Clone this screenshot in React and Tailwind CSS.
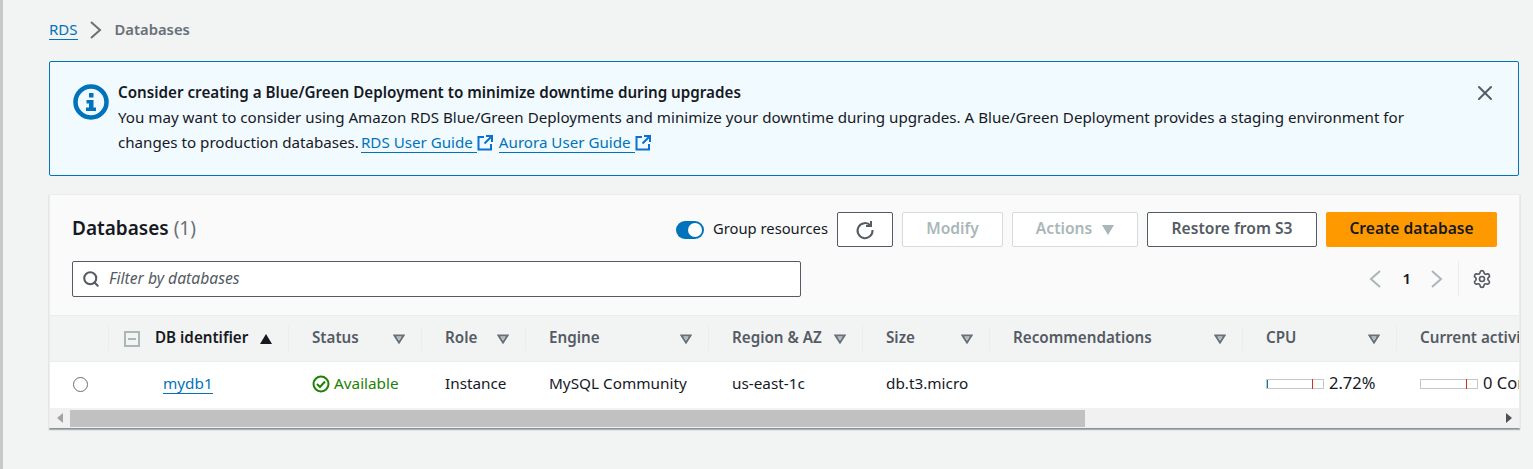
import { Search, Settings, X } from "lucide-react";

const FONT = "font-['Noto_Sans','Liberation_Sans',sans-serif]";

function ExternalIcon() {
  return (
    <svg width="16" height="16" viewBox="0 0 16 16" fill="none" stroke="#0972d3" strokeWidth="2" className="shrink-0">
      <path d="M7 2H1.500v12.500H14V9" />
      <path d="M9 1h6v6M15 1L7.500 8.500" />
    </svg>
  );
}

function InfoIcon() {
  return (
    <svg width="38" height="38" viewBox="0 0 38 38" className="shrink-0">
      <circle cx="19" cy="19" r="15.500" fill="none" stroke="#0073bb" strokeWidth="4.500" />
      <rect x="17" y="10" width="4.500" height="4.500" fill="#0073bb" />
      <path d="M14.500 17h7v7.500h2.500v3.500H14v-3.500h3v-4h-2.500z" fill="#0073bb" />
    </svg>
  );
}

function Caret({ color = "#687078" }) {
  return (
    <svg width="12" height="10" viewBox="0 0 12 10" className="shrink-0">
      <path d="M1.500 1.500h9L6 8.500z" fill="none" stroke={color} strokeWidth="2" strokeLinejoin="miter" />
      <path d="M4 3h4L6 6z" fill="#aab7b8" />
    </svg>
  );
}

function Chevron({ left, color, className }) {
  return (
    <svg width="12" height="18" viewBox="0 0 12 18" fill="none" stroke={color} strokeWidth="2" className={`shrink-0 ${className}`}>
      <path d={left ? "M11 1L2 9l9 8" : "M1 1l9 8-9 8"} />
    </svg>
  );
}

function Alert() {
  return (
    <div className="mt-[13px] ml-[46px] mr-[14px] h-[115px] border border-[#0073bb] rounded-[2px] bg-[#f1faff] flex pl-[22px] pr-[21px] pt-[18px]">
      <div className="mt-[3px] w-[46px]">
        <InfoIcon />
      </div>
      <div className="flex-1 text-[15.15px] leading-[25px] text-[#16191f] whitespace-nowrap">
        <div className="font-semibold text-[15.2px]">Consider creating a Blue/Green Deployment to minimize downtime during upgrades</div>
        <div>You may want to consider using Amazon RDS Blue/Green Deployments and minimize your downtime during upgrades. A Blue/Green Deployment provides a staging environment for</div>
        <div className="flex items-center">
          changes to production databases.
          <a className="ml-[2px] pr-[4px] text-[#0073bb] border-b border-[#0073bb] leading-[20px]">RDS User Guide</a>
          <ExternalIcon />
          <a className="ml-[6px] pr-[4px] text-[#0073bb] border-b border-[#0073bb] leading-[20px]">Aurora User Guide</a>
          <ExternalIcon />
        </div>
      </div>
      <X size={24} strokeWidth={2} className="text-[#545b64] mt-[1px]" />
    </div>
  );
}

function Toolbar() {
  const label = "pb-[2px] text-[15.6px] font-semibold";
  return (
    <div className="h-[121px] bg-[#fafafa] border-b border-[#eaeded] pl-[22px] pr-[22px] pt-[17px]">
      <div className="flex items-center h-[35px]">
        <div className="text-[19px] font-semibold text-[#16191f] leading-[32px] pb-[3px]">
          Databases <span className="font-normal text-[#687078]">(1)</span>
        </div>
        <div className="ml-auto w-[28px] h-[18px] rounded-full bg-[#0073bb] relative">
          <span className="absolute right-[2px] top-[2px] w-[14px] h-[14px] rounded-full bg-white" />
        </div>
        <span className="ml-[9px] pb-[2px] text-[14.75px] text-[#16191f]">Group resources</span>
        <button className="ml-[9px] w-[56px] h-[35px] border border-[#545b64] rounded-[2px] bg-white flex items-center justify-center">
          <svg width="20" height="20" viewBox="0 0 20 20" fill="none" stroke="#545b64" strokeWidth="2">
            <path d="M15.500 5.500A7.500 7.500 0 1 0 17.500 10" />
            <path d="M16 1v5h-5" />
          </svg>
        </button>
        <button className={`ml-[9px] w-[101px] h-[35px] border border-[#d5dbdb] rounded-[2px] bg-white text-[#aab7b8] ${label}`}>Modify</button>
        <button className={`ml-[9px] w-[126px] h-[35px] border border-[#d5dbdb] rounded-[2px] bg-white text-[#aab7b8] flex items-center justify-center gap-[10px] ${label}`}>
          Actions
          <svg width="12" height="10" viewBox="0 0 12 10" className="mt-[2px]"><path d="M0 0h12L6 10z" fill="#aab7b8" /></svg>
        </button>
        <button className={`ml-[9px] w-[170px] h-[35px] border border-[#545b64] rounded-[2px] bg-white text-[#545b64] ${label}`}>Restore from S3</button>
        <button className={`ml-[9px] w-[171px] h-[35px] rounded-[2px] bg-[#ff9900] text-[#16191f] ${label}`}>Create database</button>
      </div>
      <div className="flex items-center mt-[14px] h-[36px]">
        <div className="w-[729px] h-[36px] border border-[#545b64] rounded-[2px] bg-white flex items-center pl-[9px]">
          <Search size={18} strokeWidth={2.750} className="text-[#545b64]" />
          <span className="ml-[9px] pb-[1px] text-[15.7px] italic text-[#545b64]">Filter by databases</span>
        </div>
        <Chevron left color="#aab7b8" className="ml-auto" />
        <span className="ml-[21px] mr-[20px] pb-[2px] text-[15px] font-semibold text-[#16191f]">1</span>
        <Chevron color="#aab7b8" />
        <div className="ml-[15px] mr-[5px] h-[36px] border-l border-[#eaeded] pl-[13px] flex items-center">
          <Settings size={20} strokeWidth={2} className="text-[#545b64]" />
        </div>
      </div>
    </div>
  );
}

const columns = [
  { label: "Status" },
  { label: "Role" },
  { label: "Engine" },
  { label: "Region & AZ" },
  { label: "Size" },
  { label: "Recommendations" },
  { label: "CPU" },
];

function Meter({ load }) {
  return (
    <div className="w-[58px] h-[10px] border border-[#c4c8cc] relative shrink-0">
      {load && <span className="absolute left-0 top-0 w-[1px] h-full bg-[#0073bb]" />}
      <span className="absolute left-[45px] -top-[1px] w-[1px] h-[10px] bg-[#d13212]" />
    </div>
  );
}

function HeadCell({ label }) {
  return (
    <div className="flex items-center h-[45px]">
      <div className="w-full h-[25px] flex items-center pl-[23px] pr-[16px] text-[15.2px] font-semibold text-[#545b64] whitespace-nowrap border-r border-[#eaeded]">
        <span className="pb-[2px]">{label}</span>
        <span className="ml-auto"><Caret /></span>
      </div>
    </div>
  );
}

function Table() {
  const cell = "flex items-center h-[46px] pl-[23px] pb-[3px] text-[15.3px] text-[#16191f] whitespace-nowrap bg-white";
  return (
    <div className="overflow-hidden">
      <div className="grid grid-cols-[59px_180px_133px_104px_183px_154px_127px_253px_154px_300px] w-[1647px]">
        <div className="flex items-center h-[45px]"><div className="w-full h-[25px] border-r border-[#eaeded]" /></div>
        <div className="flex items-center h-[45px]">
          <div className="w-full h-[25px] border-r border-[#eaeded] flex items-center pl-[15px] pr-[16px] text-[15.2px] font-semibold text-[#16191f]">
            <span className="w-[16px] h-[16px] border-2 border-[#aab7b8] flex items-center justify-center mr-[15px]">
              <span className="w-[8px] h-[2px] bg-[#aab7b8]" />
            </span>
            <span className="pb-[3px]">DB identifier</span>
            <svg width="12" height="10" viewBox="0 0 12 10" className="ml-auto"><path d="M6 0l6 10H0z" fill="#16191f" /></svg>
          </div>
        </div>
        {columns.map((c) => (
          <HeadCell key={c.label} label={c.label} />
        ))}
        <div className="flex items-center h-[45px]">
          <div className="h-[25px] flex items-center pl-[23px] pb-[2px] text-[15.2px] font-semibold text-[#545b64] whitespace-nowrap">Current activity</div>
        </div>

        <div className="col-span-10 border-t border-[#eaeded]" />

        <div className="bg-white flex items-center h-[46px] pl-[23px] pb-[2px]">
          <span className="w-[15px] h-[15px] rounded-full border border-[#687078] bg-white" />
        </div>
        <div className={`${cell} !pl-[54px]`}>
          <a className="text-[#0073bb] border-b border-[#0073bb] leading-[20px]">mydb1</a>
        </div>
        <div className={cell}>
          <svg width="18" height="18" viewBox="0 0 18 18" fill="none" stroke="#1d8102" strokeWidth="2" className="mr-[4px] mt-[1px]">
            <circle cx="9" cy="9" r="7.500" />
            <path d="M5 9l3 3 5-5.500" />
          </svg>
          <span className="text-[#1d8102]">Available</span>
        </div>
        <div className={cell}>Instance</div>
        <div className={cell}>MySQL Community</div>
        <div className={cell}>us-east-1c</div>
        <div className={cell}>db.t3.micro</div>
        <div className={cell} />
        <div className={cell}>
          <Meter load />
          <span className="ml-[5px] text-[16.5px]">2.72%</span>
        </div>
        <div className={cell}>
          <Meter />
          <span className="ml-[5px] text-[16.5px]">0 Connections</span>
        </div>
        <div className="bg-white" />
      </div>
    </div>
  );
}

function Scrollbar() {
  return (
    <div className="h-[20px] bg-[#f1f1f1] flex items-center">
      <div className="w-[20px] flex items-center justify-center">
        <svg width="6" height="10" viewBox="0 0 6 10"><path d="M6 0v10L0 5z" fill="#a3a3a3" /></svg>
      </div>
      <div className="w-[1015px] h-[17px] bg-[#c1c1c1]" />
      <div className="ml-auto w-[20px] flex items-center justify-center">
        <svg width="6" height="10" viewBox="0 0 6 10"><path d="M0 0v10l6-5z" fill="#505050" /></svg>
      </div>
    </div>
  );
}

export default function App() {
  return (
    <div className={`${FONT} h-[469px] bg-[#f2f3f3] border-l-[3px] border-[#c8c8c8] overflow-hidden`}>
      <div className="h-[48px] ml-[46px] pt-[11px] flex items-center text-[15px]">
        <a className="text-[#0073bb] border-b border-[#0073bb] leading-[20px]">RDS</a>
        <Chevron color="#687078" className="ml-[12px] mr-[13px]" />
        <span className="font-semibold text-[14.8px] text-[#687078]">Databases</span>
      </div>
      <Alert />
      <div className="mt-[18px] ml-[46px] mr-[13px] border border-[#eaeded] border-b-[#879596] shadow-[0_1px_1px_rgba(0,28,36,0.3)] overflow-hidden">
        <Toolbar />
        <Table />
        <Scrollbar />
      </div>
    </div>
  );
}
